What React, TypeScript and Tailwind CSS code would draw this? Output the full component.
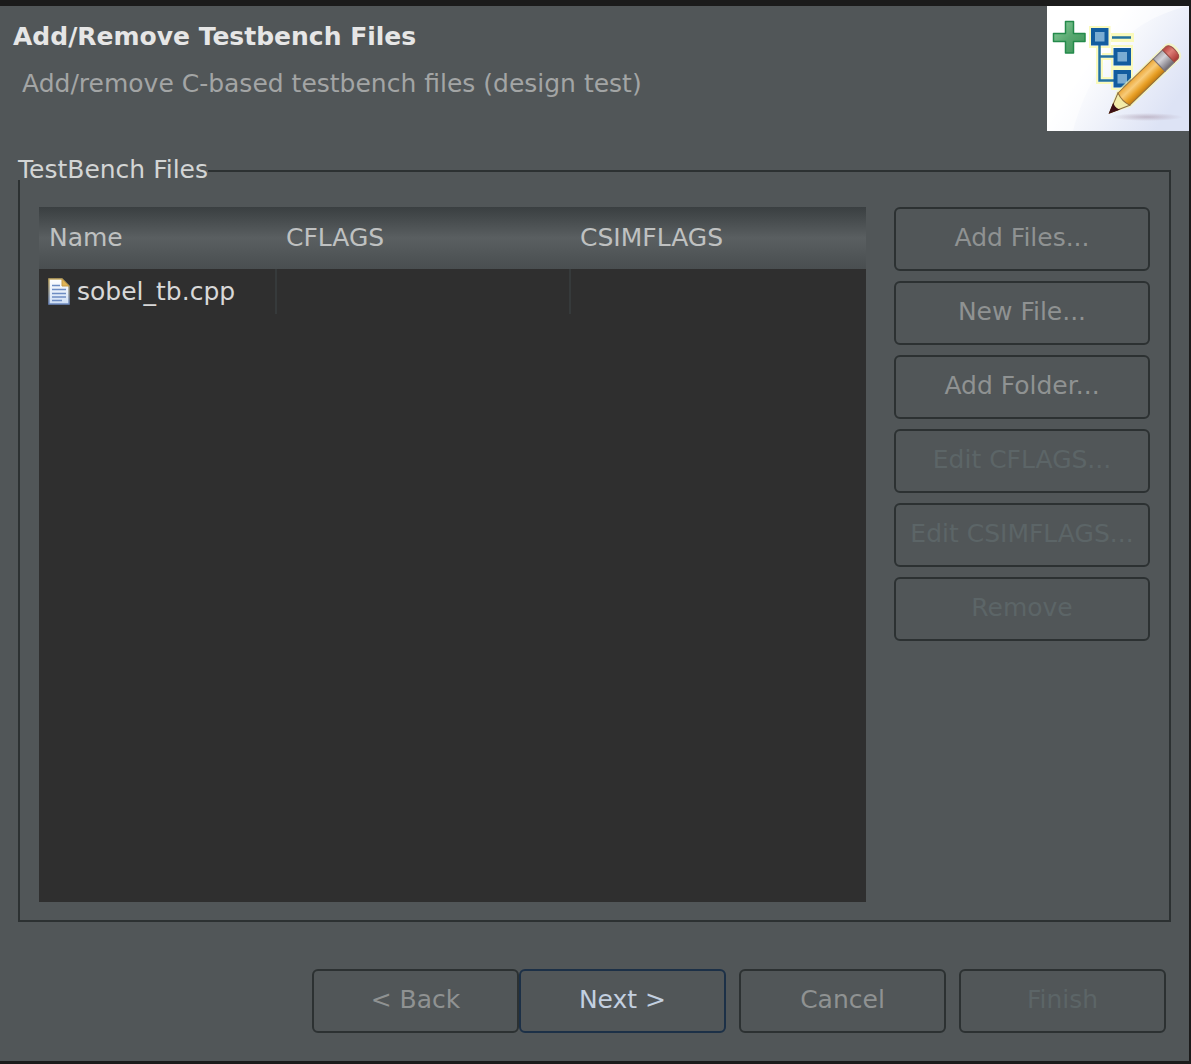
import type { ReactNode } from "react";

function WizardBanner() {
  return (
    <svg viewBox="0 0 142 125" className="h-[125px] w-[142px] shrink-0" role="img" aria-label="Edit file tree">
      <defs>
        <linearGradient id="bg" x1="0" y1="0" x2="1" y2="0.6">
          <stop offset="0.4" stopColor="#ffffff" />
          <stop offset="1" stopColor="#dde3f5" />
        </linearGradient>
        <linearGradient id="green" x1="0" y1="0" x2="1" y2="1">
          <stop offset="0" stopColor="#8fd0a0" />
          <stop offset="0.5" stopColor="#58a870" />
          <stop offset="1" stopColor="#3c9457" />
        </linearGradient>
        <linearGradient id="wood" x1="0" y1="0" x2="0" y2="1">
          <stop offset="0" stopColor="#eda838" />
          <stop offset="0.35" stopColor="#f7cb7a" />
          <stop offset="0.7" stopColor="#e9a127" />
          <stop offset="1" stopColor="#c27c12" />
        </linearGradient>
        <linearGradient id="metal" x1="0" y1="0" x2="0" y2="1">
          <stop offset="0" stopColor="#a7a5a9" />
          <stop offset="0.35" stopColor="#d3d2d8" />
          <stop offset="1" stopColor="#6d6870" />
        </linearGradient>
        <linearGradient id="rubber" x1="0" y1="0" x2="0" y2="1">
          <stop offset="0" stopColor="#b8423e" />
          <stop offset="0.4" stopColor="#de8078" />
          <stop offset="1" stopColor="#a83530" />
        </linearGradient>
        <radialGradient id="shadow">
          <stop offset="0" stopColor="#b9aebf" stopOpacity="0.8" />
          <stop offset="1" stopColor="#b9aebf" stopOpacity="0" />
        </radialGradient>
      </defs>
      <rect width="142" height="125" fill="#ffffff" />
      <rect width="142" height="125" fill="url(#bg)" />
      <path d="M0 0H142C88 12 48 48 26 125H0Z" fill="#ffffff" fillOpacity="0.5" />
      <g fill="none" stroke="#fafabc" strokeWidth="2">
        <path d="M43 21H62.500V41H43Z" />
        <path d="M65 40H85V61H65Z" />
        <path d="M65 63H85V83H65Z" />
        <path d="M50 41V77H65M55 48H65M55 53H65V72H55Z" />
        <path d="M64 31.500H87" strokeWidth="9" />
      </g>
      <path
        d="M18.500 15.500H26.500V27.500H38V35.500H26.500V47H18.500V35.500H6.500V27.500H18.500Z"
        fill="url(#green)"
        stroke="#248a4b"
        strokeWidth="1.500"
        strokeLinejoin="round"
      />
      <path d="M52.500 38V74.500H67M52.500 50.500H67M65 31.500H84" fill="none" stroke="#24729c" strokeWidth="2.500" />
      <g fill="#7aacd2" stroke="#125c9f" strokeWidth="4">
        <rect x="46" y="24" width="13.500" height="13.500" />
        <rect x="68.500" y="44" width="13.500" height="13.500" />
        <rect x="68.500" y="66" width="13.500" height="13.500" />
      </g>
      <ellipse cx="100" cy="111" rx="36" ry="4" fill="url(#shadow)" />
      <g transform="translate(62.500 107) rotate(-44)">
        <path d="M-1 0L20 -10.500H88Q94 -9 94 0Q94 9 88 10.500H20Z" fill="#f7f7b4" fillOpacity="0.7" />
        <path d="M0 0L20 -8.500V8.500Z" fill="#f3eca8" stroke="#8b6f45" strokeWidth="1" />
        <path d="M0 0L9 -4Q7 0 9 4Z" fill="#3d0f14" stroke="#3d0f14" strokeWidth="1" />
        <path d="M20 -8.500H69V8.500H20Q17 0 20 -8.500Z" fill="url(#wood)" stroke="#94703c" strokeWidth="1" />
        <path d="M69 -8.500H82V8.500H69Z" fill="url(#metal)" stroke="#7c7278" strokeWidth="1" />
        <path d="M82 -8.500H87Q91 -8 91 0Q91 8 87 8.500H82Z" fill="url(#rubber)" stroke="#9a5048" strokeWidth="1" />
      </g>
    </svg>
  );
}

function FileIcon() {
  return (
    <svg viewBox="0 0 22 27" className="h-[27px] w-[22px] shrink-0" aria-hidden="true">
      <defs>
        <linearGradient id="paper" x1="0" y1="0" x2="0" y2="1">
          <stop offset="0" stopColor="#ffffff" />
          <stop offset="1" stopColor="#cfdff5" />
        </linearGradient>
        <linearGradient id="edge" x1="0" y1="0" x2="0" y2="1">
          <stop offset="0" stopColor="#c6ab62" />
          <stop offset="1" stopColor="#6f8cc3" />
        </linearGradient>
      </defs>
      <path d="M1 1H14L21 8V26H1Z" fill="url(#paper)" stroke="url(#edge)" strokeWidth="1.500" />
      <path d="M14 1V8H21Z" fill="#dfb356" stroke="#c39a45" />
      <path d="M4 7.500H12M4 11.500H18M4 15.500H18M4 19H18M4 22.500H14" stroke="#6d8cc2" strokeWidth="1.500" />
    </svg>
  );
}

type Tone = "normal" | "primary" | "disabled";

const tones: Record<Tone, string> = {
  normal: "border-[#2c3132] text-[#8f9292]",
  primary: "border-[#1c3047] text-[#c3d0e0]",
  disabled: "border-[#2c3132] text-[#5c6567]",
};

function Button({ tone = "normal", width, children }: { tone?: Tone; width: string; children: ReactNode }) {
  return (
    <button
      type="button"
      disabled={tone === "disabled"}
      className={`h-16 whitespace-nowrap rounded-md border-2 pb-0.5 ${width} ${tones[tone]}`}
    >
      {children}
    </button>
  );
}

const columns = ["Name", "CFLAGS", "CSIMFLAGS"];

export default function App() {
  return (
    <main className="flex min-h-screen flex-col border-t-[6px] border-r-2 border-b-[3px] border-[#1b1b1b] bg-[#515658] font-['DejaVu_Sans',sans-serif] text-[25px] leading-8">
      <header className="flex items-start justify-between">
        <div className="pt-[15px] pl-[13px]">
          <h1 className="font-bold text-[#e6e6e6]">Add/Remove Testbench Files</h1>
          <p className="mt-[15px] pl-[9px] text-[#a3a5a5]">Add/remove C-based testbench files (design test)</p>
        </div>
        <WizardBanner />
      </header>

      <section
        aria-labelledby="files-title"
        className="mx-[18px] mt-[39px] flex grow flex-col border-2 border-[#2c3132] px-[19px] pb-[18px]"
      >
        <h2 id="files-title" className="-mt-3 -ml-[21px] self-start bg-[#515658] leading-5 text-[#d3d5d5]">
          TestBench Files
        </h2>
        <div className="mt-[27px] flex grow gap-7">
          <div className="grow bg-[#2f2f2f]">
            <table className="w-full table-fixed border-collapse text-left">
              <colgroup>
                <col className="w-[237px]" />
                <col className="w-[294px]" />
                <col />
              </colgroup>
              <thead>
                <tr className="h-[62px] bg-linear-to-b from-[#3a3f41] via-[#5a5f61] to-[#494e50]">
                  {columns.map((column) => (
                    <th key={column} scope="col" className="px-2.5 font-normal text-[#bfc1c1]">
                      {column}
                    </th>
                  ))}
                </tr>
              </thead>
              <tbody>
                <tr className="h-[45px] text-[#d8d8d8]">
                  <td className="border-r-2 border-[#363a3b] pl-[9px]">
                    <span className="flex items-center gap-[7px]">
                      <FileIcon />
                      sobel_tb.cpp
                    </span>
                  </td>
                  <td className="border-r-2 border-[#363a3b]" />
                  <td />
                </tr>
              </tbody>
            </table>
          </div>
          <div className="flex shrink-0 flex-col gap-2.5">
            <Button width="w-64">Add Files...</Button>
            <Button width="w-64">New File...</Button>
            <Button width="w-64">Add Folder...</Button>
            <Button width="w-64" tone="disabled">Edit CFLAGS...</Button>
            <Button width="w-64" tone="disabled">Edit CSIMFLAGS...</Button>
            <Button width="w-64" tone="disabled">Remove</Button>
          </div>
        </div>
      </section>

      <footer className="mt-[47px] mb-7 flex justify-end gap-[13px] pr-[23px]">
        <div className="flex">
          <Button width="w-[207px]">&lt; Back</Button>
          <Button width="w-[207px]" tone="primary">Next &gt;</Button>
        </div>
        <Button width="w-[207px]">Cancel</Button>
        <Button width="w-[207px]" tone="disabled">Finish</Button>
      </footer>
    </main>
  );
}
